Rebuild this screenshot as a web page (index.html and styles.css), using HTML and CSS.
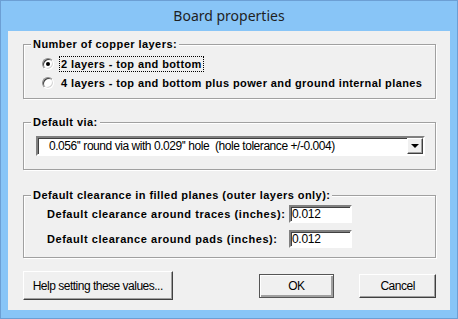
FILE: index.html
```html
<!DOCTYPE html>
<html lang="en">
<head>
    <meta charset="UTF-8">
    <title>Board properties</title>
    <link rel="stylesheet" href="styles.css">
</head>
<body>
    <div class="window">
        <div class="titlebar">Board properties</div>
        <div class="client">
            <fieldset class="group group-layers">
                <legend class="group_title">Number of copper layers:</legend>
                <div class="group_body">
                    <label class="radio">
                        <span class="radio_dot checked"></span>
                        <span class="radio_text focus">2 layers - top and bottom</span>
                    </label>
                    <label class="radio">
                        <span class="radio_dot"></span>
                        <span class="radio_text">4 layers - top and bottom plus power and ground internal planes</span>
                    </label>
                </div>
            </fieldset>

            <fieldset class="group group-via">
                <legend class="group_title">Default via:</legend>
                <div class="group_body">
                    <div class="combo">
                        <span class="combo_text">0.056'' round via with 0.029'' hole  (hole tolerance +/-0.004)</span>
                        <span class="combo_btn"><span class="arrow"></span></span>
                    </div>
                </div>
            </fieldset>

            <fieldset class="group group-clear">
                <legend class="group_title">Default clearance in filled planes (outer layers only):</legend>
                <div class="group_body fields">
                    <span class="field_label">Default clearance around traces (inches):</span>
                    <span class="edit">0.012</span>
                    <span class="field_label">Default clearance around pads (inches):</span>
                    <span class="edit">0.012</span>
                </div>
            </fieldset>

            <div class="buttons">
                <button class="btn btn-help">Help setting these values...</button>
                <button class="btn btn-default">OK</button>
                <button class="btn btn-cancel">Cancel</button>
            </div>
        </div>
    </div>
</body>
</html>
```

FILE: styles.css
```css
body {
    margin: 0;
    background: #f0f0f0;
}
.window {
    width: 458px;
    height: 319px;
    box-sizing: border-box;
    background: #88c5f7;
    border: 1px solid #6c9fd4;
}
.titlebar {
    height: 30px;
    line-height: 29px;
    text-align: center;
    font-family: "Noto Sans", sans-serif;
    font-size: 14px;
    color: #1f1f1f;
}
.client {
    height: 279px;
    margin: 0 7px;
    box-sizing: border-box;
    background: #f0f0f0;
    padding: 6px 14px 0 15px;
    font-family: "Liberation Sans", Arial, sans-serif;
    color: #000;
}
.group {
    margin: 0;
    padding: 0;
    border: 1px solid #a0a0a0;
    box-shadow: 1px 1px 0 #fff, inset 1px 1px 0 #fff;
    min-width: 0;
}
.group_title {
    margin-left: 7px;
    padding: 0 2px;
    height: 14px;
    line-height: 14px;
    font-size: 11px;
    font-weight: bold;
    letter-spacing: 0.45px;
    background: #f0f0f0;
}
.group-layers .group_body {
    padding: 3px 0 6px 18px;
}
.radio {
    display: flex;
    align-items: center;
    height: 19px;
    font-size: 11px;
    font-weight: bold;
    letter-spacing: 0.4px;
}
.radio_dot {
    width: 10px;
    height: 10px;
    border-radius: 50%;
    border: 1px solid #8d8d8d;
    border-right-color: #fff;
    border-bottom-color: #fff;
    box-shadow: inset 1px 1px 0 #404040, inset -1px -1px 0 #d4d4d4;
    background: #fff;
    position: relative;
    margin-right: 5px;
}
.radio_dot.checked::after {
    content: "";
    position: absolute;
    left: 3px;
    top: 3px;
    width: 4px;
    height: 4px;
    border-radius: 50%;
    background: #000;
}
.radio_text {
    padding: 1px 1px;
    border: 1px dotted transparent;
}
.radio_text.focus {
    border-color: #000;
}
.group-via {
    margin-top: 16px;
}
.group-via .group_body {
    padding: 7px 10px 13px 12px;
}
.combo {
    display: flex;
    align-items: center;
    height: 20px;
    box-sizing: border-box;
    background: #fff;
    border: 2px solid;
    border-color: #808080 #fff #fff #808080;
    box-shadow: inset 1px 1px 0 #404040;
    font-size: 12px;
    letter-spacing: -0.45px;
    white-space: pre;
}
.combo_text {
    flex: 1;
    padding-left: 11px;
}
.combo_btn {
    width: 16px;
    height: 16px;
    box-sizing: border-box;
    background: #f0f0f0;
    border: 1px solid;
    border-color: #fff #404040 #404040 #fff;
    box-shadow: inset -1px -1px 0 #a0a0a0;
    display: flex;
    align-items: center;
    justify-content: center;
}
.arrow {
    width: 0;
    height: 0;
    border-left: 4px solid transparent;
    border-right: 4px solid transparent;
    border-top: 4px solid #000;
}
.group-clear {
    margin-top: 18px;
}
.fields {
    display: grid;
    grid-template-columns: 242px 63px;
    row-gap: 7px;
    align-items: center;
    padding: 3px 0 9px 23px;
}
.field_label {
    font-size: 11px;
    font-weight: bold;
    letter-spacing: 0.55px;
}
.edit {
    height: 18px;
    line-height: 15px;
    box-sizing: border-box;
    background: #fff;
    border: 2px solid;
    border-color: #808080 #fff #fff #808080;
    box-shadow: inset 1px 1px 0 #404040;
    padding-left: 1px;
    font-size: 12px;
    letter-spacing: -0.3px;
}
.buttons {
    display: flex;
    align-items: center;
    margin-top: 13px;
}
.btn {
    font-family: "Liberation Sans", Arial, sans-serif;
    font-size: 12px;
    letter-spacing: -0.5px;
    color: #000;
    background: #f0f0f0;
    border: 1px solid;
    border-color: #fff #404040 #404040 #fff;
    box-shadow: inset -1px -1px 0 #a0a0a0;
    padding: 0;
}
.btn-help {
    width: 150px;
    height: 29px;
}
.btn-default {
    width: 76px;
    height: 24px;
    margin-left: 86px;
    border: 1px solid #555;
    box-shadow: inset 1px 1px 0 #fff, inset -2px -2px 0 #a0a0a0;
}
.btn-cancel {
    width: 77px;
    height: 24px;
    margin-left: 25px;
}
```
